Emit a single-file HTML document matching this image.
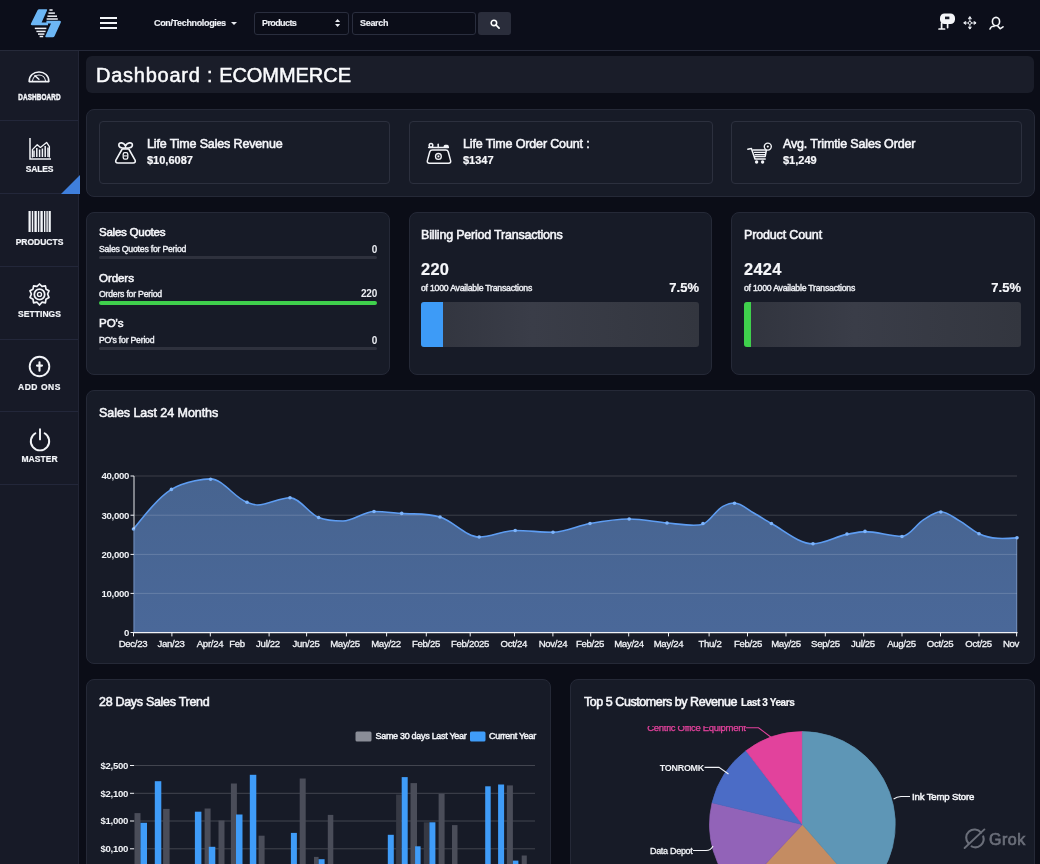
<!DOCTYPE html>
<html lang="en">
<head>
<meta charset="utf-8">
<title>Dashboard : ECOMMERCE</title>
<style>
*{box-sizing:border-box;margin:0;padding:0}
html,body{width:1040px;height:864px;overflow:hidden;background:#0b0d17;}
body{font-family:"Liberation Sans",sans-serif;color:#f2f3f7;position:relative;-webkit-font-smoothing:antialiased}
.abs{position:absolute}
/* top bar */
#topbar{position:absolute;left:0;top:0;width:1040px;height:51px;background:#0c0e1a;border-bottom:1px solid #262a3a}
#topbar .txt{position:absolute;font-size:9.5px;font-weight:700;color:#eef0f5;white-space:nowrap;-webkit-text-stroke:.15px #eef0f5}
.field{position:absolute;top:12px;height:23px;border:1px solid #2a2e3e;border-radius:3px;background:#0b0d18}
/* sidebar */
#sidebar{position:absolute;left:0;top:51px;width:79px;height:813px;background:#171a27;border-right:1px solid #222535}
.sitem{position:absolute;left:0;width:78px;border-bottom:1px solid #23273a}
.slabel{position:absolute;left:0;width:79px;text-align:center;font-size:8.5px;font-weight:700;color:#f2f4f8;-webkit-text-stroke:.2px #f2f4f8;letter-spacing:.2px;white-space:nowrap}
.sicon{position:absolute}
/* cards */
.card{position:absolute;background:#171b27;border:1px solid #252937;border-radius:8px}
.inner{position:absolute;background:#181c28;border:1px solid #2c303e;border-radius:4px}
.h{position:absolute;font-size:12.5px;font-weight:400;color:#f5f6fa;white-space:nowrap;-webkit-text-stroke:.55px #f5f6fa;letter-spacing:-.15px}
.s{position:absolute;font-size:8.7px;font-weight:400;color:#eceef3;white-space:nowrap;-webkit-text-stroke:.42px #eceef3;letter-spacing:-.22px}
.v{position:absolute;font-size:11px;font-weight:700;color:#f6f7fa;white-space:nowrap;-webkit-text-stroke:.2px #f6f7fa}
.r{text-align:right}
.bar{position:absolute;height:3px;border-radius:2px;background:#2e313d}
svg{position:absolute;overflow:visible}
svg text{font-family:"Liberation Sans",sans-serif}
</style>
</head>
<body>
<div id="wrap" style="position:absolute;left:0;top:0;width:1040px;height:864px;will-change:transform">

<!-- ================= TOP BAR ================= -->
<div id="topbar">
  <!-- logo -->
  <svg id="logo" style="left:30px;top:8px" width="33" height="30" viewBox="0 0 33 30">
    <path d="M9.2 1.2 H16.4 Q17.6 1.2 17 2.4 L11.6 14.6 H18 V17.3 H2 Q0.2 17.3 1 15.6 L7.4 2.4 Q8 1.2 9.2 1.2 Z" fill="#6cb6f5"/>
    <path d="M16.4 12.8 H29.6 Q31.6 12.8 30.8 14.6 L24.6 28 Q24 29.2 22.8 29.2 H16.2 Q14.8 29.2 15.4 28 L21 15.4 H16.4 Z" fill="#6cb6f5"/>
    <g stroke="#eef1f7" stroke-width="1.5">
      <path d="M19.4 2 H22.6"/><path d="M18.4 5.1 H24.9"/><path d="M17.4 8.2 H27"/><path d="M16.6 11 H27.8"/>
      <path d="M4.8 20.4 H16.4"/><path d="M6.4 23.4 H15.6"/><path d="M8 26.1 H14.4"/><path d="M9.6 28.5 H13.2"/>
    </g>
  </svg>
  <!-- hamburger -->
  <div class="abs" style="left:100px;top:17px;width:17px;height:2px;background:#f4f5f8"></div>
  <div class="abs" style="left:100px;top:22px;width:17px;height:2px;background:#f4f5f8"></div>
  <div class="abs" style="left:100px;top:27px;width:17px;height:2px;background:#f4f5f8"></div>
  <div class="txt" id="co" style="left:154px;top:18px;font-size:9px;letter-spacing:-.35px">Con/Technologies</div>
  <div class="abs" style="left:231px;top:22px;width:0;height:0;border-left:3px solid transparent;border-right:3px solid transparent;border-top:3.5px solid #e9ebf1"></div>
  <div class="field" style="left:254px;width:95px"></div>
  <div class="txt" style="left:262px;top:18px;font-size:9px;letter-spacing:-.6px">Products</div>
  <svg style="left:335px;top:19.2px" width="5.2" height="8" viewBox="0 0 7 11"><path d="M3.5 0 L7 4 H0Z M3.5 11 L7 7 H0Z" fill="#e9ebf1"/></svg>
  <div class="field" style="left:352px;width:124px"></div>
  <div class="txt" style="left:360px;top:18px;font-size:9px;letter-spacing:-.3px">Search</div>
  <div class="abs" style="left:478px;top:12px;width:33px;height:23px;border-radius:3px;background:#2a2d3b"></div>
  <svg style="left:489.6px;top:18.6px" width="10" height="10" viewBox="0 0 11 11"><circle cx="4.3" cy="4.3" r="3" fill="none" stroke="#fff" stroke-width="1.7"/><path d="M6.6 6.6 L10 10" stroke="#fff" stroke-width="1.9" stroke-linecap="round"/></svg>
  <!-- right icons -->
  <svg style="left:937.5px;top:12.7px" width="19" height="19" viewBox="0 0 19 19">
    <rect x="2" y="0.5" width="15" height="10.5" rx="4.5" fill="#f4f5f8"/>
    <rect x="7" y="3.6" width="4.4" height="2.6" fill="#1a1d29"/>
    <path d="M3.6 10 V15.5 M1 16 H6.6 M9.6 10 V14.6" stroke="#f4f5f8" stroke-width="1.7" stroke-linecap="round" fill="none"/>
  </svg>
  <svg style="left:962.6px;top:16px" width="13.8" height="13.8" viewBox="0 0 15 15">
    <g fill="none" stroke="#e8eaf0" stroke-width="1.1" stroke-linecap="round" stroke-linejoin="round">
      <path d="M7.5 2.6 V5.2 M7.5 9.8 V12.4 M2.6 7.5 H5.2 M9.8 7.5 H12.4"/>
      <path d="M6 3 L7.5 1.2 L9 3 M6 12 L7.5 13.8 L9 12 M3 6 L1.2 7.5 L3 9 M12 6 L13.8 7.5 L12 9"/>
      <circle cx="7.5" cy="7.5" r="1.7" stroke-width="1"/>
    </g>
    <g fill="#e8eaf0"><circle cx="7.5" cy="1.9" r="1.25"/><circle cx="7.5" cy="13.1" r="1.25"/><circle cx="1.9" cy="7.5" r="1.25"/><circle cx="13.1" cy="7.5" r="1.25"/></g>
  </svg>
  <svg style="left:988.3px;top:15.8px" width="17" height="16" viewBox="0 0 17 16">
    <g fill="none" stroke="#f4f5f8" stroke-width="1.6" stroke-linecap="round">
      <ellipse cx="8" cy="5.6" rx="3.6" ry="4.2"/>
      <path d="M2 13 C3 10.6 5 10 6 10.4 M10 10.4 C11 11.4 11.6 12 12 12.6 M12.4 12.6 L15 10.8"/>
    </g>
  </svg>
</div>

<!-- ================= SIDEBAR ================= -->
<div id="sidebar">
  <div class="sitem" style="top:0;height:70px"></div>
  <div class="sitem" style="top:70px;height:73px"></div>
  <div class="sitem" style="top:143px;height:73px"></div>
  <div class="sitem" style="top:216px;height:73px"></div>
  <div class="sitem" style="top:289px;height:72px"></div>
  <div class="sitem" style="top:361px;height:73px"></div>
</div>

<!-- sidebar icons + labels (page coords) -->
<!-- dashboard gauge -->
<svg style="left:27.6px;top:71px" width="22" height="11.6" viewBox="0 0 23 12">
  <path d="M1.2 11 C1.2 4.6 5.8 1 11.5 1 C17.2 1 21.8 4.6 21.8 11 Z" fill="none" stroke="#f2f4f8" stroke-width="1.7" stroke-linejoin="round"/>
  <path d="M4.6 10.6 C5 6.6 8 4.2 11.5 4.2 C15 4.2 18 6.6 18.4 10.6" fill="none" stroke="#f2f4f8" stroke-width="1.1"/>
  <path d="M7.2 4.8 L11.4 8.6" stroke="#f2f4f8" stroke-width="1.5" stroke-linecap="round"/>
</svg>
<div class="slabel" style="top:92px;transform:scaleX(.745);-webkit-text-stroke:.5px #f2f4f8">DASHBOARD</div>
<!-- sales chart icon -->
<svg style="left:28px;top:137px" width="24" height="24" viewBox="0 0 24 24">
  <path d="M2 1 V22 H23" fill="none" stroke="#f2f4f8" stroke-width="1.5"/>
  <g stroke="#f2f4f8" stroke-width="1.5"><path d="M6 20 V13.6 M8.8 20 V11 M11.6 20 V12.4 M14.4 20 V11.6 M17.2 20 V9 M20 20 V10.4"/></g>
  <path d="M4.4 20.4 V12.6 L9.2 7.8 L12.4 10.4 L18.6 5.4 L21.4 9.6 V20.4" fill="none" stroke="#f2f4f8" stroke-width="1.3" stroke-linejoin="round"/>
</svg>
<div class="slabel" style="top:164px;letter-spacing:-.2px">SALES</div>
<div class="abs" style="left:60.5px;top:174.5px;width:0;height:0;border-left:19px solid transparent;border-bottom:19px solid #3f7fdc;z-index:3"></div>
<!-- barcode -->
<svg style="left:28px;top:211px" width="23" height="21" viewBox="0 0 23 21">
  <g fill="#f2f4f8"><rect x="0.5" y="0" width="2.2" height="21"/><rect x="3.8" y="0" width="1.4" height="21"/><rect x="6.4" y="0" width="2.4" height="21"/><rect x="9.9" y="0" width="1.4" height="21"/><rect x="12.4" y="0" width="2.4" height="21"/><rect x="16" y="0" width="1.4" height="21"/><rect x="18.4" y="0" width="1.4" height="21"/><rect x="20.6" y="0" width="2.2" height="21"/></g>
</svg>
<div class="slabel" style="top:237px;letter-spacing:0">PRODUCTS</div>
<!-- settings gear -->
<svg style="left:28px;top:283px" width="23" height="23" viewBox="0 0 23 23">
  <path d="M11.5 1 L14 3.4 L17.4 2.8 L18 6.2 L21 7.8 L19.6 11 L21 14.6 L18 16.2 L17.4 19.8 L14 19.2 L11.5 22 L9 19.2 L5.6 19.8 L5 16.2 L2 14.6 L3.4 11 L2 7.8 L5 6.2 L5.6 2.8 L9 3.4 Z" fill="none" stroke="#f2f4f8" stroke-width="1.7" stroke-linejoin="round"/>
  <circle cx="11.5" cy="11.4" r="5.2" fill="none" stroke="#f2f4f8" stroke-width="1.8"/>
  <circle cx="11.5" cy="11.4" r="2" fill="none" stroke="#f2f4f8" stroke-width="1.4"/>
</svg>
<div class="slabel" style="top:309px;letter-spacing:.05px">SETTINGS</div>
<!-- add ons -->
<svg style="left:28px;top:355px" width="23" height="23" viewBox="0 0 23 23">
  <circle cx="11.5" cy="11.5" r="9.8" fill="none" stroke="#f2f4f8" stroke-width="1.9"/>
  <path d="M11.5 7.4 V15.8 M9 10.6 H14" stroke="#f2f4f8" stroke-width="2.1" stroke-linecap="round"/>
</svg>
<div class="slabel" style="top:382px;letter-spacing:.55px">ADD ONS</div>
<!-- master power -->
<svg style="left:29px;top:428px" width="22" height="23" viewBox="0 0 22 23">
  <path d="M6.4 5.2 A9.2 9.2 0 1 0 15.6 5.2" fill="none" stroke="#f2f4f8" stroke-width="1.9" stroke-linecap="round"/>
  <path d="M11 1.2 V11.4" stroke="#f2f4f8" stroke-width="1.9" stroke-linecap="round"/>
</svg>
<div class="slabel" style="top:454px;letter-spacing:.05px">MASTER</div>


<!-- ================= TITLE ================= -->
<div class="abs" style="left:86px;top:56px;width:948px;height:37px;border-radius:6px;background:#1a1d29"></div>
<div class="abs" id="title" style="left:96px;top:63px;font-size:20px;line-height:24px;color:#fafbfd;white-space:nowrap;letter-spacing:.37px;-webkit-text-stroke:.5px #fafbfd"><span style="letter-spacing:.75px">Dashboard :</span> <span style="letter-spacing:-.05px">ECOMMERCE</span></div>


<!-- ================= STATS ROW ================= -->
<div class="card" style="left:86px;top:109px;width:949px;height:88px"></div>
<div class="inner" style="left:99px;top:121px;width:291px;height:63px"></div>
<div class="inner" style="left:409px;top:121px;width:304px;height:63px"></div>
<div class="inner" style="left:731px;top:121px;width:291px;height:63px"></div>
<!-- money bag -->
<svg style="left:114px;top:141px" width="23" height="23" viewBox="0 0 23 23">
  <g fill="#10131c" stroke="#f2f4f8" stroke-width="1.6" stroke-linejoin="round" stroke-linecap="round">
    <path d="M8.2 8 H14.8 L21.2 19.4 Q21.8 22 19.2 22 H3.8 Q1.2 22 1.8 19.4 Z"/>
    <path d="M11.5 6.8 C9.6 7.4 4.8 7.2 4.8 3.9 C4.8 0.8 10 1.2 11.5 5.2 C13 1.2 18.4 0.8 18.4 3.9 C18.4 7.2 13.4 7.4 11.5 6.8 Z" fill="none"/>
  </g>
  <rect x="9.2" y="11.6" width="4.6" height="6.6" rx="1.6" fill="none" stroke="#f2f4f8" stroke-width="1.3"/>
  <path d="M10 14.9 H13" stroke="#f2f4f8" stroke-width="1.1"/>
</svg>
<div class="h" id="st1" style="left:147px;top:137px">Life Time Sales Revenue</div>
<div class="v" style="left:147px;top:154px">$10,6087</div>
<!-- money briefcase -->
<svg style="left:426px;top:142px" width="26" height="22" viewBox="0 0 26 22">
  <g fill="none" stroke="#f2f4f8" stroke-width="1.5" stroke-linejoin="round" stroke-linecap="round">
    <path d="M6.4 8 H19.8 Q21.6 8 22.2 9.8 L24.6 18.6 Q25.2 21.2 22.6 21.2 H3.4 Q0.8 21.2 1.4 18.6 L3.8 9.8 Q4.4 8 6.4 8 Z" fill="#10131c"/>
    <path d="M2.6 5.6 H22.4"/>
    <circle cx="5" cy="3.4" r="1.8"/><path d="M12.2 2.2 V5.4"/>
  </g>
  <rect x="17.6" y="2.8" width="5.2" height="3.2" rx="1.6" fill="#f2f4f8"/>
  <circle cx="12.4" cy="14.4" r="2.9" fill="none" stroke="#f2f4f8" stroke-width="1.3"/>
  <circle cx="12.4" cy="14.4" r="1.1" fill="#f2f4f8"/>
</svg>
<div class="h" id="st2" style="left:463px;top:137px">Life Time Order Count :</div>
<div class="v" style="left:463px;top:154px">$1347</div>
<!-- cart -->
<svg style="left:746px;top:140px" width="27" height="25" viewBox="0 0 27 25">
  <g fill="none" stroke="#f2f4f8" stroke-width="1.5" stroke-linejoin="round" stroke-linecap="round">
    <path d="M1.8 9.2 L5.4 8.4 L9 19 H19.2"/>
    <path d="M7 10 H20.4 L19.2 16.4 H8.6"/>
    <path d="M8.4 12.4 H19.6 M9 14.6 H19.2" stroke-width="1.1"/>
    <circle cx="21.8" cy="6.6" r="3.5" stroke-width="1.4" fill="#10131c"/>
  </g>
  <circle cx="21.8" cy="6.6" r="1.1" fill="#f2f4f8"/>
  <circle cx="10.6" cy="22" r="1.7" fill="#f2f4f8"/><circle cx="16.6" cy="22" r="1.7" fill="#f2f4f8"/>
</svg>
<div class="h" id="st3" style="left:783px;top:137px">Avg. Trimtie Sales Order</div>
<div class="v" style="left:783px;top:154px">$1,249</div>


<!-- ================= ROW 2 ================= -->
<div class="card" style="left:86px;top:212px;width:304px;height:163px"></div>
<div class="card" style="left:409px;top:212px;width:303px;height:163px"></div>
<div class="card" style="left:731px;top:212px;width:304px;height:163px"></div>
<!-- card A -->
<div class="h" id="a1" style="left:99px;top:224.5px;font-size:11.6px;letter-spacing:-.28px">Sales Quotes</div>
<div class="s" id="a2" style="left:99px;top:244px">Sales Quotes for Period</div>
<div class="s r" style="left:340px;width:37px;top:244px;font-size:10px;font-weight:700;-webkit-text-stroke:0">0</div>
<div class="bar" style="left:99px;top:256px;width:278px"></div>
<div class="h" id="a3" style="left:99px;top:270.5px;font-size:11.6px;letter-spacing:-.1px">Orders</div>
<div class="s" style="left:99px;top:289px">Orders for Period</div>
<div class="s r" style="left:340px;width:37px;top:288px;font-size:10px;font-weight:700;-webkit-text-stroke:0">220</div>
<div class="bar" style="left:99px;top:301px;width:278px;height:4px;background:#3fd04c"></div>
<div class="h" id="a5" style="left:99px;top:315.5px;font-size:11.6px;letter-spacing:-.1px">PO's</div>
<div class="s" style="left:99px;top:335px">PO's for Period</div>
<div class="s r" style="left:340px;width:37px;top:335px;font-size:10px;font-weight:700;-webkit-text-stroke:0">0</div>
<div class="bar" style="left:99px;top:347px;width:278px"></div>
<!-- card B -->
<div class="h" id="b1" style="left:421px;top:228px;letter-spacing:-.21px">Billing Period Transactions</div>
<div class="v" id="b2" style="left:421px;top:259.5px;font-size:16.4px;letter-spacing:.3px">220</div>
<div class="s" id="b3" style="left:421px;top:283px">of 1000 Available Transactions</div>
<div class="v r" style="left:640px;width:59px;top:280px;font-size:13px">7.5%</div>
<div class="abs" style="left:421px;top:302px;width:278px;height:45px;border-radius:3px;background:linear-gradient(90deg,#31343e,#3a3d48 40%,#33363f)"></div>
<div class="abs" style="left:421px;top:302px;width:22px;height:45px;border-radius:3px 0 0 3px;background:#3d9bf7"></div>
<!-- card C -->
<div class="h" id="c1" style="left:744px;top:228px">Product Count</div>
<div class="v" style="left:744px;top:259.5px;font-size:16.4px;letter-spacing:.3px">2424</div>
<div class="s" style="left:744px;top:283px">of 1000 Available Transactions</div>
<div class="v r" style="left:962px;width:59px;top:280px;font-size:13px">7.5%</div>
<div class="abs" style="left:744px;top:302px;width:277px;height:45px;border-radius:3px;background:linear-gradient(90deg,#31343e,#3a3d48 40%,#33363f)"></div>
<div class="abs" style="left:744px;top:302px;width:7px;height:45px;border-radius:3px 0 0 3px;background:#3fd04c"></div>


<!-- ================= SALES CHART ================= -->
<div class="card" style="left:86px;top:390px;width:949px;height:274px"></div>
<div class="h" id="sc" style="left:99px;top:406px;letter-spacing:-.05px">Sales Last 24 Months</div>
<svg id="saleschart" style="left:0;top:0" width="1040" height="864" viewBox="0 0 1040 864">
  <defs><linearGradient id="ag" x1="0" y1="0" x2="0" y2="1"><stop offset="0" stop-color="#476490"/><stop offset="1" stop-color="#4a6899"/></linearGradient></defs>
  <path d="M133.5 529.0 C146.1 513.2 158.8 497.3 171.4 489.4 C179.3 484.5 187.1 482.5 195.0 480.8 C200.2 479.7 205.4 478.9 210.6 478.9 C222.7 478.9 234.9 498.2 247.0 502.3 C250.6 503.5 254.1 505.0 257.7 505.0 C268.5 505.0 279.2 497.7 290.0 497.7 C299.5 497.7 309.1 513.7 318.6 517.5 C326.7 520.7 334.9 521.0 343.0 521.0 C353.3 521.0 363.7 511.5 374.0 511.5 C383.2 511.5 392.5 512.7 401.7 513.4 C414.5 514.4 427.2 513.2 440.0 517.0 C453.1 520.9 466.1 537.0 479.2 537.0 C491.2 537.0 503.2 530.5 515.2 530.5 C527.8 530.5 540.4 532.3 553.0 532.3 C565.3 532.3 577.7 525.7 590.0 523.5 C603.1 521.2 616.1 519.0 629.2 519.0 C641.8 519.0 654.4 521.8 667.0 523.0 C675.9 523.8 684.8 525.3 693.7 525.3 C696.8 525.3 699.9 525.3 703.0 524.2 C709.6 521.8 716.3 509.8 722.9 506.4 C726.8 504.4 730.6 503.0 734.5 503.0 C741.1 503.0 747.6 509.6 754.2 513.3 C759.9 516.5 765.7 520.3 771.4 523.5 C785.3 531.3 799.1 543.8 813.0 543.8 C824.3 543.8 835.7 536.6 847.0 534.4 C853.0 533.2 859.0 531.6 865.0 531.6 C877.4 531.6 889.9 536.3 902.3 536.3 C909.4 536.3 916.6 523.9 923.7 519.6 C929.4 516.2 935.1 511.8 940.8 511.8 C946.9 511.8 953.1 517.1 959.2 520.6 C965.8 524.3 972.4 530.6 979.0 533.7 C991.7 539.7 1004.3 538.7 1017.0 537.8 L1017 632.5 L133.5 632.5 Z" fill="url(#ag)"/>
  <g stroke="#ffffff" stroke-opacity=".16" stroke-width="1" fill="none"><path d="M134 476 H1017"/><path d="M134 515.2 H1017"/><path d="M134 554.4 H1017"/><path d="M134 593.4 H1017"/></g>
  <path d="M133.5 529.0 C146.1 513.2 158.8 497.3 171.4 489.4 C179.3 484.5 187.1 482.5 195.0 480.8 C200.2 479.7 205.4 478.9 210.6 478.9 C222.7 478.9 234.9 498.2 247.0 502.3 C250.6 503.5 254.1 505.0 257.7 505.0 C268.5 505.0 279.2 497.7 290.0 497.7 C299.5 497.7 309.1 513.7 318.6 517.5 C326.7 520.7 334.9 521.0 343.0 521.0 C353.3 521.0 363.7 511.5 374.0 511.5 C383.2 511.5 392.5 512.7 401.7 513.4 C414.5 514.4 427.2 513.2 440.0 517.0 C453.1 520.9 466.1 537.0 479.2 537.0 C491.2 537.0 503.2 530.5 515.2 530.5 C527.8 530.5 540.4 532.3 553.0 532.3 C565.3 532.3 577.7 525.7 590.0 523.5 C603.1 521.2 616.1 519.0 629.2 519.0 C641.8 519.0 654.4 521.8 667.0 523.0 C675.9 523.8 684.8 525.3 693.7 525.3 C696.8 525.3 699.9 525.3 703.0 524.2 C709.6 521.8 716.3 509.8 722.9 506.4 C726.8 504.4 730.6 503.0 734.5 503.0 C741.1 503.0 747.6 509.6 754.2 513.3 C759.9 516.5 765.7 520.3 771.4 523.5 C785.3 531.3 799.1 543.8 813.0 543.8 C824.3 543.8 835.7 536.6 847.0 534.4 C853.0 533.2 859.0 531.6 865.0 531.6 C877.4 531.6 889.9 536.3 902.3 536.3 C909.4 536.3 916.6 523.9 923.7 519.6 C929.4 516.2 935.1 511.8 940.8 511.8 C946.9 511.8 953.1 517.1 959.2 520.6 C965.8 524.3 972.4 530.6 979.0 533.7 C991.7 539.7 1004.3 538.7 1017.0 537.8" fill="none" stroke="#5e9df2" stroke-width="1.6" stroke-linejoin="round"/>
  <g fill="#7db4fb"><circle cx="133.5" cy="529.0" r="1.8"/><circle cx="171.4" cy="489.4" r="1.8"/><circle cx="210.6" cy="479.2" r="1.8"/><circle cx="247.0" cy="502.3" r="1.8"/><circle cx="290.0" cy="497.7" r="1.8"/><circle cx="318.6" cy="517.5" r="1.8"/><circle cx="374.0" cy="511.5" r="1.8"/><circle cx="401.7" cy="513.4" r="1.8"/><circle cx="440.0" cy="517.0" r="1.8"/><circle cx="479.2" cy="537.0" r="1.8"/><circle cx="515.2" cy="530.5" r="1.8"/><circle cx="553.0" cy="532.3" r="1.8"/><circle cx="590.0" cy="523.5" r="1.8"/><circle cx="629.2" cy="519.0" r="1.8"/><circle cx="667.0" cy="523.0" r="1.8"/><circle cx="703.0" cy="523.5" r="1.8"/><circle cx="734.5" cy="503.2" r="1.8"/><circle cx="771.4" cy="523.5" r="1.8"/><circle cx="813.0" cy="543.8" r="1.8"/><circle cx="847.0" cy="534.0" r="1.8"/><circle cx="865.0" cy="531.4" r="1.8"/><circle cx="902.0" cy="536.5" r="1.8"/><circle cx="940.8" cy="512.0" r="1.8"/><circle cx="979.0" cy="533.7" r="1.8"/><circle cx="1017.0" cy="537.8" r="1.8"/></g>
  <g stroke="#f0f2f6" stroke-width="1" fill="none"><path d="M134 476 V529" stroke-opacity=".95"/><path d="M134 529 V632" stroke="#8fb0e0" stroke-opacity=".55"/><path d="M1016.8 538 V632" stroke="#a8c4ec" stroke-opacity=".5"/><path d="M133.4 632.6 H1017.6" stroke-width="1.3"/><path d="M133.5 632.5 V636.4"/><path d="M171.9 632.5 V636.4"/><path d="M210.3 632.5 V636.4"/><path d="M269.1 632.5 V636.4"/><path d="M306.6 632.5 V636.4"/><path d="M346.4 632.5 V636.4"/><path d="M386.6 632.5 V636.4"/><path d="M426.3 632.5 V636.4"/><path d="M470.2 632.5 V636.4"/><path d="M514.5 632.5 V636.4"/><path d="M552.9 632.5 V636.4"/><path d="M590.7 632.5 V636.4"/><path d="M628.7 632.5 V636.4"/><path d="M668.5 632.5 V636.4"/><path d="M709.1 632.5 V636.4"/><path d="M747.5 632.5 V636.4"/><path d="M786.0 632.5 V636.4"/><path d="M825.3 632.5 V636.4"/><path d="M863.7 632.5 V636.4"/><path d="M902.0 632.5 V636.4"/><path d="M940.5 632.5 V636.4"/><path d="M979.0 632.5 V636.4"/><path d="M1016.6 632.5 V636.4"/></g>
  <g stroke="#f0f2f6" stroke-width="1" fill="none"><path d="M130.5 476 H134 M130.5 515.2 H134 M130.5 554.4 H134 M130.5 593.4 H134 M130.5 632.5 H134"/></g>
  <g font-size="9.6" font-weight="700" fill="#f1f3f7" letter-spacing="-.3"><text x="129" y="479.4" text-anchor="end">40,000</text><text x="129" y="518.6" text-anchor="end">30,000</text><text x="129" y="557.8" text-anchor="end">20,000</text><text x="129" y="596.8" text-anchor="end">10,000</text><text x="129" y="635.9" text-anchor="end">0</text></g>
  <g font-size="9.6" font-weight="400" fill="#f1f3f7" stroke="#f1f3f7" stroke-width=".3" letter-spacing="-.3"><text x="133.0" y="647.4" text-anchor="middle">Dec/23</text><text x="171.0" y="647.4" text-anchor="middle">Jan/23</text><text x="210.0" y="647.4" text-anchor="middle">Apr/24</text><text x="237.0" y="647.4" text-anchor="middle">Feb</text><text x="268.0" y="647.4" text-anchor="middle">Jul/22</text><text x="306.0" y="647.4" text-anchor="middle">Jun/25</text><text x="345.0" y="647.4" text-anchor="middle">May/25</text><text x="386.0" y="647.4" text-anchor="middle">May/22</text><text x="426.0" y="647.4" text-anchor="middle">Feb/25</text><text x="470.0" y="647.4" text-anchor="middle">Feb/2025</text><text x="513.8" y="647.4" text-anchor="middle">Oct/24</text><text x="553.0" y="647.4" text-anchor="middle">Nov/24</text><text x="590.0" y="647.4" text-anchor="middle">Feb/25</text><text x="629.0" y="647.4" text-anchor="middle">May/24</text><text x="668.5" y="647.4" text-anchor="middle">May/24</text><text x="710.0" y="647.4" text-anchor="middle">Thu/2</text><text x="748.0" y="647.4" text-anchor="middle">Feb/25</text><text x="786.0" y="647.4" text-anchor="middle">May/25</text><text x="825.4" y="647.4" text-anchor="middle">Sep/25</text><text x="863.0" y="647.4" text-anchor="middle">Jul/25</text><text x="901.5" y="647.4" text-anchor="middle">Aug/25</text><text x="940.0" y="647.4" text-anchor="middle">Oct/25</text><text x="978.6" y="647.4" text-anchor="middle">Oct/25</text><text x="1011.0" y="647.4" text-anchor="middle">Nov</text></g>
</svg>


<!-- ================= BOTTOM ROW ================= -->
<div class="card" style="left:86px;top:679px;width:465px;height:200px"></div>
<div class="card" style="left:570px;top:679px;width:465px;height:200px"></div>
<div class="h" id="d1" style="left:99px;top:695px;letter-spacing:-.3px">28 Days Sales Trend</div>
<div class="h" id="e1" style="left:584px;top:695px;letter-spacing:-.45px">Top 5 Customers by Revenue</div>
<div class="v" id="e2" style="left:741px;top:697px;font-size:10px;letter-spacing:-.4px">Last 3 Years</div>
<svg id="bottomsvg" style="left:0;top:0" width="1040" height="864" viewBox="0 0 1040 864">
  <g stroke="#ffffff" stroke-opacity=".19" stroke-width="1" fill="none"><path d="M134 765.5 H535"/><path d="M134 793.3 H535"/><path d="M134 821 H535"/><path d="M134 848.8 H535"/></g>
  <g fill="#4a4d59"><rect x="134.5" y="813.1" width="6.0" height="56.9"/><rect x="163.1" y="808.9" width="6.5" height="61.1"/><rect x="204.6" y="808.5" width="6.0" height="61.5"/><rect x="218.5" y="820.5" width="6.0" height="49.5"/><rect x="230.9" y="783.5" width="6.0" height="86.5"/><rect x="258.6" y="835.7" width="6.0" height="34.3"/><rect x="299.7" y="778.5" width="6.0" height="91.5"/><rect x="314.0" y="856.9" width="4.6" height="13.1"/><rect x="327.8" y="814.9" width="5.5" height="55.1"/><rect x="396.1" y="794.6" width="5.5" height="75.4" fill="#363944"/><rect x="410.5" y="783.1" width="6.5" height="86.9"/><rect x="423.8" y="822.3" width="5.5" height="47.7" fill="#363944"/><rect x="438.6" y="793.7" width="6.0" height="76.3"/><rect x="452.0" y="825.1" width="5.5" height="44.9"/><rect x="506.9" y="785.4" width="6.0" height="84.6"/><rect x="521.7" y="855.5" width="5.1" height="14.5"/></g>
  <g fill="#3f9cf8"><rect x="140.5" y="822.8" width="6.5" height="47.2"/><rect x="154.8" y="781.2" width="6.5" height="88.8"/><rect x="194.9" y="811.7" width="6.5" height="58.3"/><rect x="208.8" y="846.8" width="6.5" height="23.2"/><rect x="236.0" y="814.5" width="6.5" height="55.5"/><rect x="249.8" y="774.8" width="6.5" height="95.2"/><rect x="290.9" y="832.9" width="6.0" height="37.1"/><rect x="318.6" y="859.2" width="6.0" height="10.8"/><rect x="387.8" y="834.8" width="6.0" height="35.2"/><rect x="401.7" y="777.1" width="6.0" height="92.9"/><rect x="415.1" y="846.3" width="5.5" height="23.7"/><rect x="429.4" y="822.3" width="6.0" height="47.7"/><rect x="485.2" y="786.3" width="5.5" height="83.7"/><rect x="498.1" y="784.5" width="6.0" height="85.5"/><rect x="512.9" y="860.6" width="5.5" height="9.4"/></g>
  <g font-size="9.6" font-weight="700" fill="#f1f3f7" letter-spacing="-.3"><text x="128" y="768.9" text-anchor="end">$2,500</text><path d="M130 765.5 H134" stroke="#f1f3f7" stroke-width="1"/><text x="128" y="796.7" text-anchor="end">$2,100</text><path d="M130 793.3 H134" stroke="#f1f3f7" stroke-width="1"/><text x="128" y="824.4" text-anchor="end">$1,000</text><path d="M130 821 H134" stroke="#f1f3f7" stroke-width="1"/><text x="128" y="852.2" text-anchor="end">$0,100</text><path d="M130 848.8 H134" stroke="#f1f3f7" stroke-width="1"/></g>
  <rect x="355.5" y="731.5" width="16" height="10" rx="1.5" fill="#8a8d97"/>
  <rect x="470" y="731.5" width="15.5" height="10" rx="1.5" fill="#3f9cf8"/>
  <g font-size="9" font-weight="400" fill="#f1f3f7" stroke="#f1f3f7" stroke-width=".45" letter-spacing="-.3">
    <text x="375.5" y="739.2">Same 30 days Last Year</text>
    <text x="489" y="739.2">Current Year</text>
  </g>
  <path d="M802.4 824.5 L863.7 894.3 A92.9 92.9 0 0 1 739.0 892.4 Z" fill="#c48c62" stroke="#c48c62" stroke-width=".7" stroke-linejoin="round"/><path d="M802.4 824.5 L739.0 892.4 A92.9 92.9 0 0 1 712.1 802.7 Z" fill="#9263b8" stroke="#9263b8" stroke-width=".7" stroke-linejoin="round"/><path d="M802.4 824.5 L712.1 802.7 A92.9 92.9 0 0 1 746.0 750.7 Z" fill="#4b6cc6" stroke="#4b6cc6" stroke-width=".7" stroke-linejoin="round"/><path d="M802.4 824.5 L746.0 750.7 A92.9 92.9 0 0 1 802.4 731.6 Z" fill="#e2429c" stroke="#e2429c" stroke-width=".7" stroke-linejoin="round"/><path d="M802.4 824.5 L802.4 731.6 A92.9 92.9 0 0 1 863.7 894.3 Z" fill="#5e96b6" stroke="#5e96b6" stroke-width=".7" stroke-linejoin="round"/>
  <g fill="none" stroke-width="1.1">
    <path d="M745.5 727.7 H758.5 L772 738" stroke="#e2429c"/>
    <path d="M704.5 767.4 H719 L728.5 774" stroke="#f1f3f7"/>
    <path d="M893.6 799 Q897 796.6 901 796.5 H910" stroke="#f1f3f7"/>
    <path d="M693 850.5 H706 Q711 850.5 713 846" stroke="#f1f3f7"/>
  </g>
  <g font-size="9" font-weight="400" stroke-width=".3" letter-spacing="-.3">
    <clipPath id="pc"><rect x="640" y="726" width="110" height="8"/></clipPath><text x="745.5" y="730.8" text-anchor="end" fill="#e2429c" stroke="#e2429c" font-size="9.5" clip-path="url(#pc)">Centric Office Equipment</text>
    <text x="704" y="770.6" text-anchor="end" fill="#f1f3f7" stroke="#f1f3f7" font-weight="700" stroke-width="0">TONROMK</text>
    <text x="912" y="799.6" fill="#f1f3f7" stroke="#f1f3f7" font-size="9.6" stroke-width=".5" letter-spacing="-.15">Ink Temp Store</text>
    <text x="692.5" y="853.7" text-anchor="end" fill="#f1f3f7" stroke="#f1f3f7">Data Depot</text>
  </g>
  <!-- watermark -->
  <g fill="none" stroke="#6a6e79" stroke-width="2.1" stroke-linecap="round">
    <path d="M968.6 843.6 A8.3 8.3 0 1 1 981 832.6"/>
    <path d="M983.2 836.4 A8.3 8.3 0 0 1 971.6 846.4"/>
    <path d="M964.6 848 L984.4 829.4" stroke-width="1.9"/>
  </g>
  <text x="989" y="845.4" font-size="16" fill="#6a6e79" stroke="#6a6e79" stroke-width=".7" letter-spacing=".55">Grok</text>
</svg>


</div>
</body>
</html>
